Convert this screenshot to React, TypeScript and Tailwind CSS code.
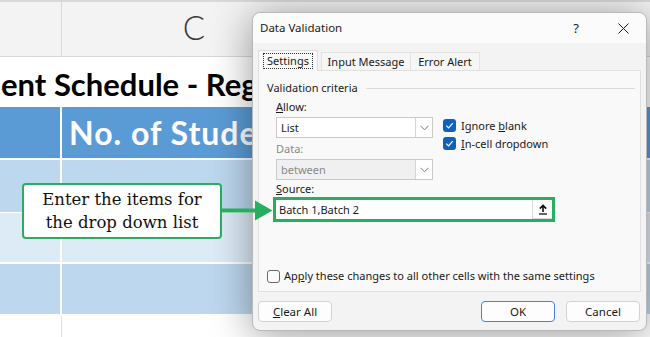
import type { ReactNode } from "react";

const green = "#27ae60";

function Check({ checked }: { checked: boolean }) {
  if (!checked) {
    return (
      <span className="block h-[13px] w-[13px] rounded-[3px] border border-[#6b6b6b] bg-[#fbfbfb]" />
    );
  }
  return (
    <span className="flex h-[13px] w-[13px] items-center justify-center rounded-[3px] bg-[#0f62b8]">
      <svg width="9" height="9" viewBox="0 0 10 10" fill="none">
        <path d="M1.5 5.2 4 7.6 8.6 2.4" stroke="white" strokeWidth="1.3" />
      </svg>
    </span>
  );
}

function Chevron() {
  return (
    <svg width="9" height="6" viewBox="0 0 9 6" fill="none">
      <path d="M0.5 0.8 4.5 4.8 8.5 0.8" stroke="#7a7a7a" strokeWidth="1" />
    </svg>
  );
}

function Select({ value, disabled }: { value: string; disabled?: boolean }) {
  return (
    <div
      className={`flex h-[21px] w-[157px] items-center border border-[#c9c9c9] ${
        disabled ? "bg-[#f0f0f0] text-[#8a8a8a]" : "bg-white text-[#1a1a1a]"
      }`}
    >
      <span className="flex-1 pl-[4px]">{value}</span>
      <span className="flex h-full w-[17px] items-center justify-center border-l border-[#d6d6d6] bg-white">
        <Chevron />
      </span>
    </div>
  );
}

function Button({ children, primary }: { children: ReactNode; primary?: boolean }) {
  return (
    <button
      className={`flex h-[21px] w-[74px] items-center justify-center rounded-[4px] border bg-[#fdfdfd] text-[11.5px] text-[#1a1a1a] ${
        primary ? "border-[#3f86d6]" : "border-[#d2d2d2]"
      }`}
    >
      {children}
    </button>
  );
}

function Sheet() {
  return (
    <div className="flex flex-col font-['Lato',sans-serif]">
      <div className="flex h-[57px] border-t-2 border-b border-[#d8d8d8] bg-[#f3f3f3]">
        <div className="w-[62px] border-r border-[#d8d8d8]" />
        <div className="flex w-[264px] items-center justify-center pb-[2px] text-[33px] font-light text-[#3a3a3a]">
          C
        </div>
      </div>
      <div className="flex h-[50px] items-center overflow-hidden whitespace-nowrap bg-white pt-[4px] text-[31px] font-bold text-black">
        <span className="ml-[1px]">ent Schedule - Registration</span>
      </div>
      <div className="flex h-[53px] border-b-2 border-white bg-[#5b9bd5]">
        <div className="w-[62px] border-r-2 border-white" />
        <div className="flex items-center whitespace-nowrap pl-[7px] text-[32px] font-bold tracking-[1px] text-white">
          No. of Students
        </div>
      </div>
      <div className="flex h-[53px] border-b border-white bg-[#bdd7ee]">
        <div className="w-[62px] border-r-2 border-white" />
      </div>
      <div className="flex h-[51px] border-b-2 border-white bg-[#ddebf7]">
        <div className="w-[62px] border-r-2 border-white" />
      </div>
      <div className="flex h-[52px] border-b-2 border-white bg-[#bdd7ee]">
        <div className="w-[62px] border-r-2 border-white" />
      </div>
      <div className="flex h-[30px] bg-white">
        <div className="w-[62px] border-r border-[#e2e2e2]" />
      </div>
    </div>
  );
}

function Dialog() {
  return (
    <div className="absolute left-[252px] top-[12px] flex h-[319px] w-[395px] flex-col rounded-[8px] border border-[#b9b9b9] bg-[#f3f3f3] font-['Noto_Sans',sans-serif] text-[11px] leading-[16px] text-[#1a1a1a] shadow-[0_4px_40px_rgba(0,0,0,0.4)]">
      <div className="flex h-[30px] items-center rounded-t-[8px] bg-[#fbfbfb] pl-[7px]">
        <span className="flex-1 text-[11.5px]">Data Validation</span>
        <span className="mr-[39px] text-[13px]">?</span>
        <svg width="11" height="11" viewBox="0 0 11 11" className="mr-[17px]">
          <path d="M0.5 0.5 10.5 10.5 M10.5 0.5 0.5 10.5" stroke="#1a1a1a" strokeWidth="1" />
        </svg>
      </div>

      <div className="flex items-end pl-[5px] pt-[7px]">
        <div className="relative z-10 -mb-px flex h-[21px] w-[60px] items-center justify-center border border-b-0 border-[#dedede] bg-[#f9f9f9]">
          <span className="border border-dotted border-[#333] px-[3px] leading-[14px]">Settings</span>
        </div>
        <div className="ml-[3px] flex h-[18px] w-[90px] items-center justify-center border border-b-0 border-[#e2e2e2] bg-[#f6f6f6]">
          Input Message
        </div>
        <div className="flex h-[18px] w-[69px] items-center justify-center border border-b-0 border-l-0 border-[#e2e2e2] bg-[#f6f6f6]">
          Error Alert
        </div>
      </div>

      <div className="mx-[5px] flex h-[222px] flex-col border border-[#e0e0e0] bg-[#f9f9f9]">
        <div className="mt-[9px] flex h-[16px] items-center pl-[8px]">
          <span>Validation criteria</span>
          <span className="ml-[8px] mr-[5px] h-px flex-1 bg-[#dcdcdc]" />
        </div>

        <div className="mt-[3px] flex pl-[17px]">
          <div className="flex flex-col">
            <span className="h-[16px]">
              <u>A</u>llow:
            </span>
            <div className="mt-[2px]">
              <Select value="List" />
            </div>
            <span className="mt-[3px] h-[16px] text-[#8a8a8a]">Data:</span>
            <div className="mt-[2px]">
              <Select value="between" disabled />
            </div>
          </div>
          <div className="ml-[10px] mt-[20px] flex flex-col gap-[5px]">
            <div className="flex h-[13px] items-center gap-[5px]">
              <Check checked />
              <span>
                Ignore <u>b</u>lank
              </span>
            </div>
            <div className="flex h-[13px] items-center gap-[5px]">
              <Check checked />
              <span>
                <u>I</u>n-cell dropdown
              </span>
            </div>
          </div>
        </div>

        <span className="mt-[1px] h-[16px] pl-[17px]">
          <u>S</u>ource:
        </span>
        <div
          className="ml-[14px] flex h-[25px] w-[282px] border-[3px] bg-white"
          style={{ borderColor: green }}
        >
          <span className="flex flex-1 items-center pl-[3px]">Batch 1,Batch 2</span>
          <span className="flex w-[20px] items-center justify-center border-l border-b border-[#d9d9d9]">
            <svg width="10" height="11" viewBox="0 0 10 11" fill="none">
              <path d="M5 8 V1.5 M1.8 4.6 5 1.4 8.2 4.6" stroke="#111" strokeWidth="1.6" />
              <path d="M1 10 H9" stroke="#111" strokeWidth="1.3" />
            </svg>
          </span>
        </div>

        <div className="mt-[46px] flex items-center gap-[4px] pl-[8px]">
          <Check checked={false} />
          <span>
            Ap<u>p</u>ly these changes to all other cells with the same settings
          </span>
        </div>
      </div>

      <div className="mt-[9px] flex items-center pl-[5px] pr-[6px]">
        <Button>
          <u>C</u>lear All
        </Button>
        <div className="flex-1" />
        <Button primary>OK</Button>
        <div className="w-[11px]" />
        <Button>Cancel</Button>
      </div>
    </div>
  );
}

function Callout() {
  return (
    <>
      <div
        className="absolute left-[22px] top-[183px] flex h-[56px] w-[200px] flex-col items-center justify-center rounded-[4px] border-2 bg-white font-['DejaVu_Serif',serif] text-[16.5px] leading-[23px] text-[#111]"
        style={{ borderColor: green }}
      >
        <span>Enter the items for</span>
        <span>the drop down list</span>
      </div>
      <svg
        className="absolute left-[221px] top-[200px]"
        width="52"
        height="21"
        viewBox="0 0 52 21"
      >
        <rect x="0" y="8.5" width="36" height="4" fill={green} />
        <path d="M34 0.5 L51.5 10.5 L34 20.5 Z" fill={green} />
      </svg>
    </>
  );
}

export default function App() {
  return (
    <div className="relative h-[337px] w-[650px] overflow-hidden bg-white">
      <Sheet />
      <Dialog />
      <Callout />
    </div>
  );
}
